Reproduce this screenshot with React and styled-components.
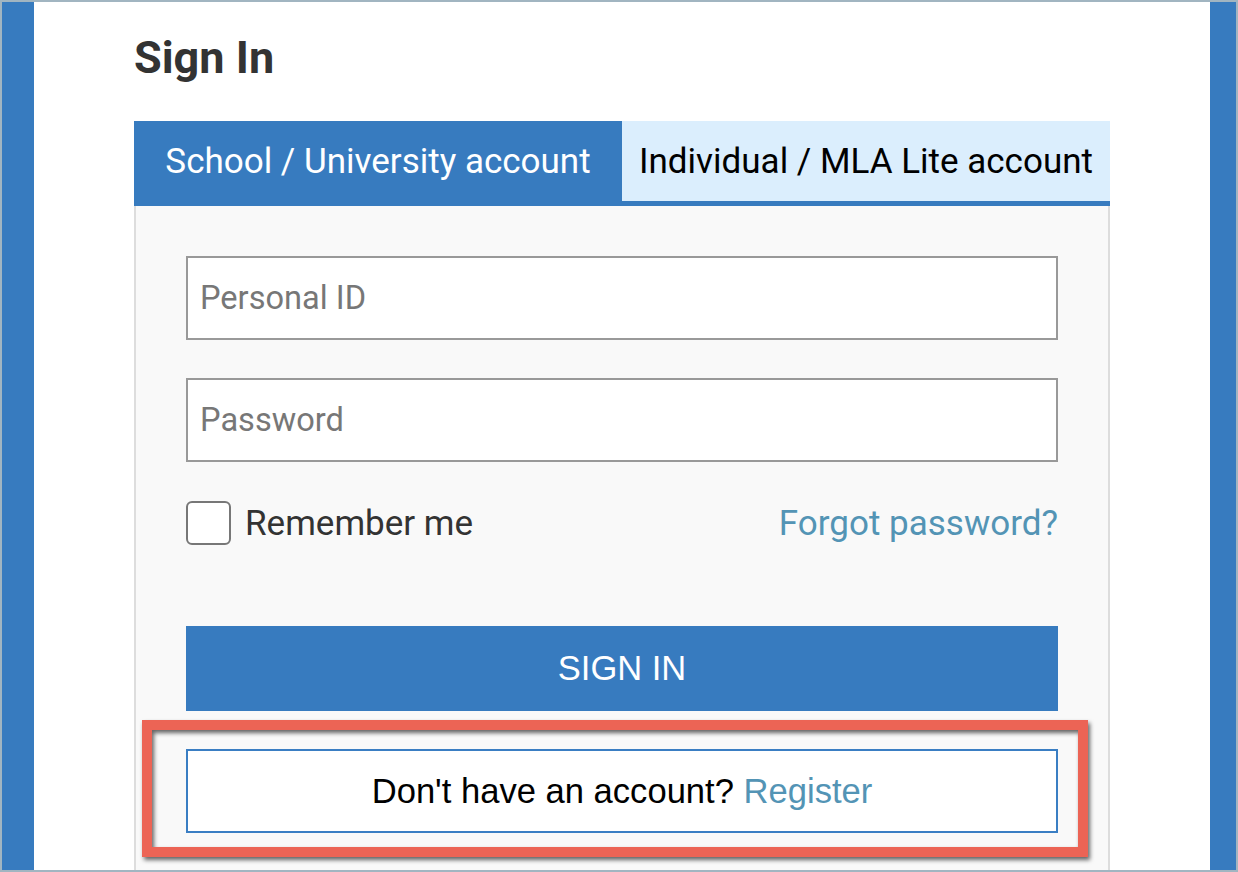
import React from "react";
import styled, { createGlobalStyle } from "styled-components";

const Global = createGlobalStyle`
  html, body { margin: 0; padding: 0; background: #fff; }
  * { box-sizing: border-box; }
  body { font-family: Roboto, "Noto Sans", Arial, sans-serif; }
`;

const Frame = styled.div`
  width: 1238px;
  height: 872px;
  border: 2px solid #a1b5c1;
  display: flex;
  overflow: hidden;
`;

const SideBar = styled.div`
  width: ${(p) => p.$w}px;
  flex: none;
  background: #377bbf;
`;

const Main = styled.main`
  flex: 1;
  background: #fff;
  padding: 33px 100px 0 100px;
  overflow: hidden;
`;

const Title = styled.h1`
  margin: 0 0 41px 0;
  font-family: Roboto, Arial, sans-serif;
  font-weight: 700;
  font-size: 45px;
  line-height: 45px;
  color: #333;
`;

const Card = styled.section`
  width: 976px;
`;

const Tabs = styled.div`
  display: grid;
  grid-template-columns: 1fr 1fr;
  border-bottom: 5px solid #377bbf;
`;

const Tab = styled.button`
  height: 80px;
  border: none;
  margin: 0;
  padding: 0;
  display: flex;
  align-items: center;
  justify-content: center;
  font-family: Roboto, Arial, sans-serif;
  font-size: 35px;
  background: ${(p) => (p.$active ? "#377bbf" : "#dbeefd")};
  color: ${(p) => (p.$active ? "#fff" : "#000")};
  cursor: pointer;
`;

const Body = styled.div`
  background: #f9f9f9;
  border-left: 2px solid #dddddd;
  border-right: 2px solid #dddddd;
  padding: 50px 50px 60px;
  display: flex;
  flex-direction: column;
`;

const Input = styled.input`
  height: 84px;
  width: 100%;
  border: 2px solid #999;
  background: #fff;
  padding: 0 12px;
  font-family: Roboto, Arial, sans-serif;
  font-size: 32.6px;
  color: #333;
  margin-bottom: ${(p) => p.$mb}px;
  outline: none;
  &::placeholder { color: #777; }
`;

const OptionsRow = styled.div`
  display: flex;
  align-items: center;
  justify-content: space-between;
  height: 44px;
  margin-bottom: 81px;
`;

const CheckLabel = styled.label`
  display: flex;
  align-items: center;
  gap: 14px;
  font-family: Roboto, Arial, sans-serif;
  font-size: 35px;
  color: #333;
`;

const Box = styled.span`
  width: 45px;
  height: 44px;
  border: 2px solid #777;
  border-radius: 6px;
  background: #fff;
  display: inline-block;
`;

const Link = styled.a`
  font-family: Roboto, Arial, sans-serif;
  font-size: 35px;
  color: #5394b5;
  text-decoration: none;
`;

const SignInButton = styled.button`
  height: 85px;
  width: 100%;
  border: none;
  background: #377bbf;
  color: #fff;
  font-family: "Liberation Sans", Arial, sans-serif;
  font-size: 34.5px;
  margin-bottom: 38px;
`;

const RegisterWrap = styled.div`
  position: relative;
`;

const RegisterBox = styled.div`
  height: 84px;
  border: 2px solid #3a7ec3;
  background: #fff;
  display: flex;
  align-items: center;
  justify-content: center;
  font-family: "Liberation Sans", Arial, sans-serif;
  font-size: 34.6px;
  color: #000;
  white-space: pre;
`;

const RegisterLink = styled.a`
  color: #5394b5;
  text-decoration: none;
`;

const Highlight = styled.div`
  position: absolute;
  top: -29px;
  left: -44px;
  right: -30px;
  bottom: -24px;
  border: 10px solid #ec6455;
  filter: drop-shadow(2px 3px 2px rgba(0, 0, 0, 0.6));
  pointer-events: none;
`;

export default function App() {
  return (
    <>
      <Global />
      <Frame>
        <SideBar $w={32} />
        <Main>
          <Title>Sign In</Title>
          <Card>
            <Tabs>
              <Tab $active>School / University account</Tab>
              <Tab>Individual / MLA Lite account</Tab>
            </Tabs>
            <Body>
              <Input placeholder="Personal ID" $mb={38} />
              <Input placeholder="Password" type="password" $mb={39} />
              <OptionsRow>
                <CheckLabel>
                  <Box />
                  Remember me
                </CheckLabel>
                <Link href="#">Forgot password?</Link>
              </OptionsRow>
              <SignInButton>SIGN IN</SignInButton>
              <RegisterWrap>
                <RegisterBox>
                  {"Don't have an account? "}
                  <RegisterLink href="#">Register</RegisterLink>
                </RegisterBox>
                <Highlight />
              </RegisterWrap>
            </Body>
          </Card>
        </Main>
        <SideBar $w={26} />
      </Frame>
    </>
  );
}
